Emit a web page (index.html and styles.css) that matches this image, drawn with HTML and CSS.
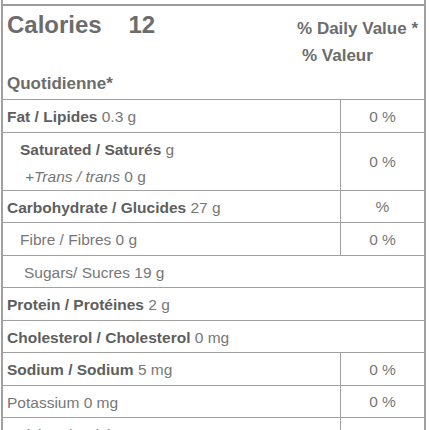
FILE: index.html
```html
<!DOCTYPE html>
<html lang="en">
  <head>
    <meta charset="UTF-8" />
    <meta name="viewport" content="width=device-width, initial-scale=1.0" />
    <title>Nutrition Facts</title>
    <link rel="stylesheet" href="styles.css">
  </head>
  <body>
    <!-- Nutrition label -->
    <div class="label">
      <div class="gap"></div>
      <div class="head">
        <div class="head-top">
          <span class="calories">Calories <span class="kcal">12</span></span>
          <span class="dv">% Daily Value *</span>
        </div>
        <div class="dv-fr">% Valeur</div>
        <div class="dv-fr2">Quotidienne*</div>
      </div>

      <div class="row">
        <div class="name"><b>Fat / Lipides</b> 0.3 g</div>
        <div class="pct">0 %</div>
      </div>
      <div class="row tall">
        <div class="name sub">
          <div><b>Saturated / Saturés</b> g</div>
          <div class="trans"><i>+Trans / trans</i> 0 g</div>
        </div>
        <div class="pct">0 %</div>
      </div>
      <div class="row">
        <div class="name"><b>Carbohydrate / Glucides</b> 27 g</div>
        <div class="pct">%</div>
      </div>
      <div class="row">
        <div class="name sub">Fibre / Fibres 0 g</div>
        <div class="pct">0 %</div>
      </div>
      <div class="row single">
        <div class="name sub2">Sugars/ Sucres 19 g</div>
      </div>
      <div class="row single">
        <div class="name"><b>Protein / Protéines</b> 2 g</div>
      </div>
      <div class="row single">
        <div class="name"><b>Cholesterol / Cholesterol</b> 0 mg</div>
      </div>
      <div class="row">
        <div class="name"><b>Sodium / Sodium</b> 5 mg</div>
        <div class="pct">0 %</div>
      </div>
      <div class="row">
        <div class="name">Potassium 0 mg</div>
        <div class="pct">0 %</div>
      </div>
      <div class="row">
        <div class="name">Calcium / Calcium 0 mg</div>
        <div class="pct">0 %</div>
      </div>
    </div>
  </body>
</html>
```

FILE: styles.css
```css
body {
  margin: 0;
  background: white;
  font-family: "Liberation Sans", Arial, sans-serif;
  color: #777;
}
.label {
  margin-left: 1px;
  width: 421px;
  border-left: 2px solid #a0a0a0;
  border-right: 2px solid #a0a0a0;
}
.gap {
  height: 4px;
}
.head {
  border-top: 2px solid #9a9a9a;
  border-bottom: 1px solid #a0a0a0;
  padding: 4px 0 1px 4px;
  font-weight: bold;
  color: #6c6c6c;
}
.head-top {
  display: flex;
  justify-content: space-between;
  align-items: flex-start;
  height: 30px;
}
.calories {
  font-size: 24px;
  line-height: 30px;
}
.kcal {
  margin-left: 20px;
}
.dv {
  font-size: 17px;
  line-height: 30px;
  margin-top: 4px;
  margin-right: 6px;
}
.dv-fr {
  font-size: 17px;
  line-height: 28px;
  margin-top: 2px;
  padding-left: 295px;
}
.dv-fr2 {
  font-size: 17px;
  line-height: 28px;
}
.row {
  display: grid;
  grid-template-columns: 1fr 84px;
  border-bottom: 1px solid #a0a0a0;
  font-size: 15.5px;
  line-height: 18px;
}
.row.single {
  grid-template-columns: 1fr;
}
.name {
  padding: 8px 4px 5.5px;
}
.name b {
  color: #5e5e5e;
}
.sub {
  padding-left: 17px;
}
.sub2 {
  padding-left: 21px;
}
.tall .name {
  padding-top: 3px;
  padding-bottom: 0;
  line-height: 27px;
}
.trans {
  padding-left: 5px;
}
.pct {
  border-left: 1px solid #a0a0a0;
  display: flex;
  align-items: center;
  justify-content: center;
  padding-top: 2px;
}
```
